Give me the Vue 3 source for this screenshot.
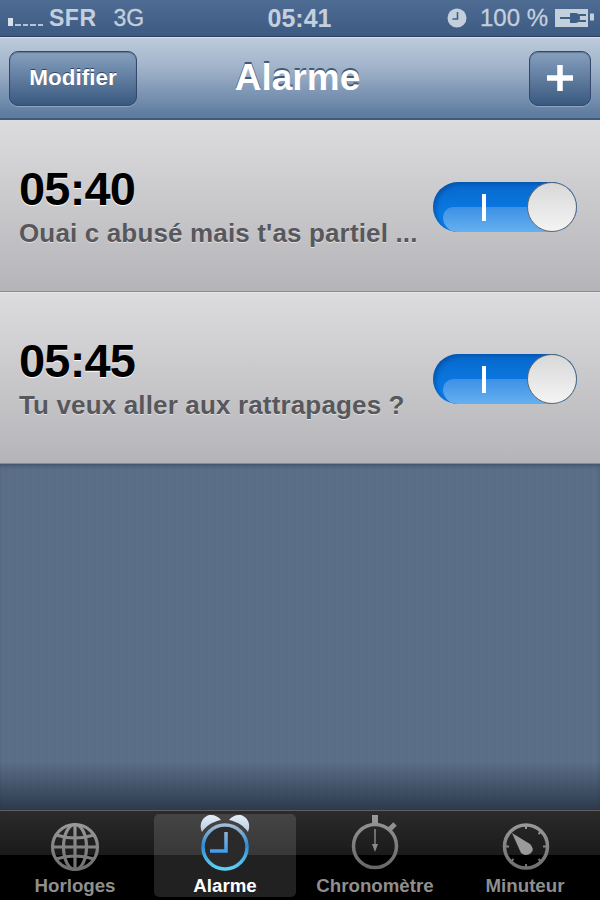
<template>
  <div class="phone">
    <div class="status-bar">
      <div class="status-left">
        <div class="signal">
          <i class="dot on"></i><i class="dot"></i><i class="dot"></i><i class="dot"></i><i class="dot"></i>
        </div>
        <span class="carrier">SFR</span>
        <span class="network">3G</span>
      </div>
      <div class="status-time">05:41</div>
      <div class="status-right">
        <svg class="status-clock" width="20" height="20" viewBox="0 0 20 20">
          <circle cx="10" cy="10" r="9.5" fill="#c4cfdc" />
          <path d="M10.500 4v7H5.500" fill="none" stroke="#3f5f86" stroke-width="1.600" />
        </svg>
        <span class="battery-text">100 %</span>
        <svg class="battery" width="40" height="20" viewBox="0 0 40 20">
          <rect x="0" y="1" width="33" height="18" fill="#c4cfdc" />
          <rect x="35" y="5.500" width="4" height="7" fill="#c4cfdc" />
          <path d="M5 10h10" stroke="#3f5f86" stroke-width="2" />
          <path d="M15 5h5q5 0 5 5t-5 5h-5z" fill="#3f5f86" />
          <path d="M24 7h7M24 13h7" stroke="#3f5f86" stroke-width="2" />
        </svg>
      </div>
    </div>

    <div class="nav-bar">
      <button class="nav-btn edit">Modifier</button>
      <div class="nav-title">Alarme</div>
      <button class="nav-btn add">
        <svg width="26" height="26" viewBox="0 0 26 26">
          <path d="M13 0v26M0 13h26" stroke="#fff" stroke-width="5.500" />
        </svg>
      </button>
    </div>

    <div class="alarm-list">
      <div class="alarm-row" v-for="alarm in alarms" :key="alarm.time">
        <div class="alarm-text">
          <div class="alarm-time">{{ alarm.time }}</div>
          <div class="alarm-label">{{ alarm.label }}</div>
        </div>
        <div class="switch">
          <div class="switch-gloss"></div>
          <div class="switch-bar"></div>
          <div class="switch-knob"></div>
        </div>
      </div>
    </div>

    <div class="backdrop"></div>

    <div class="tab-bar">
      <div class="tab">
        <svg class="tab-icon" width="50" height="50" viewBox="0 0 50 50">
          <defs>
            <linearGradient id="greyIcon" gradientUnits="userSpaceOnUse" x1="0" y1="0" x2="0" y2="58">
              <stop offset="0" stop-color="#9a9a9a" />
              <stop offset="1" stop-color="#636363" />
            </linearGradient>
          </defs>
          <g fill="none" stroke="url(#greyIcon)" stroke-width="3.200">
            <circle cx="25" cy="24" r="22.500" />
            <ellipse cx="25" cy="24" rx="11.500" ry="22.500" />
            <path d="M25 1.500v45M2.500 24h45M6 12q19 6 38 0M6 36q19-6 38 0" />
          </g>
        </svg>
        <span class="tab-label">Horloges</span>
      </div>
      <div class="tab active">
        <svg class="tab-icon" width="50" height="58" viewBox="0 0 50 58">
          <defs>
            <linearGradient id="blueRing" gradientUnits="userSpaceOnUse" x1="0" y1="9" x2="0" y2="56">
              <stop offset="0" stop-color="#a9bdd4" />
              <stop offset="0.45" stop-color="#2f8bd6" />
              <stop offset="1" stop-color="#62d6f8" />
            </linearGradient>
            <linearGradient id="bell" gradientUnits="userSpaceOnUse" x1="0" y1="0" x2="0" y2="17">
              <stop offset="0" stop-color="#e4edf8" />
              <stop offset="1" stop-color="#b9cbe2" />
            </linearGradient>
            <linearGradient id="hands" gradientUnits="userSpaceOnUse" x1="0" y1="17" x2="0" y2="38">
              <stop offset="0" stop-color="#8fb2d6" />
              <stop offset="1" stop-color="#3c9cf0" />
            </linearGradient>
          </defs>
          <path d="M2 17C-2 8 4 0 11 0c4 0 8 2 10 5C12 7 6 11 2 17z" fill="url(#bell)" />
          <path d="M48 17C52 8 46 0 39 0c-4 0-8 2-10 5 9 2 15 6 19 12z" fill="url(#bell)" />
          <circle cx="25" cy="32" r="22" fill="#2a2a2a" stroke="url(#blueRing)" stroke-width="3.500" />
          <path d="M26 17v19H10" fill="none" stroke="url(#hands)" stroke-width="3.500" />
        </svg>
        <span class="tab-label">Alarme</span>
      </div>
      <div class="tab">
        <svg class="tab-icon" width="50" height="58" viewBox="0 0 50 58">
          <g fill="none" stroke="url(#greyIcon)">
            <circle cx="25" cy="31" r="21.500" stroke-width="3.500" />
            <path d="M25 9V0" stroke-width="6" />
            <path d="M39 15l6-6" stroke-width="5" />
            <path d="M25 14v18" stroke-width="1.500" />
          </g>
          <path d="M22 29h6l-3 8z" fill="#8a8a8a" />
        </svg>
        <span class="tab-label">Chronomètre</span>
      </div>
      <div class="tab">
        <svg class="tab-icon" width="50" height="50" viewBox="0 0 50 50">
          <g fill="none" stroke="url(#greyIcon)">
            <circle cx="26" cy="23.500" r="21.500" stroke-width="3.500" />
            <path d="M26 2v4M26 41v4M4 23.500h5M43 23.500h5M41.500 8l-3 3M10.500 39l3-3M41.500 39l-3-3" stroke-width="2" />
          </g>
          <path d="M12 10l18 11q5 5 1 9-5 4-10 0z" fill="#9a9a9a" />
        </svg>
        <span class="tab-label">Minuteur</span>
      </div>
    </div>
  </div>
</template>

<script setup>
const alarms = [
  { time: '05:40', label: "Ouai c abusé mais t'as partiel ..." },
  { time: '05:45', label: 'Tu veux aller aux rattrapages ?' },
]
</script>

<style>
html,
body {
  margin: 0;
  background: #000;
}
</style>

<style scoped>
.phone {
  width: 600px;
  height: 900px;
  display: flex;
  flex-direction: column;
  overflow: hidden;
  font-family: "Liberation Sans", Arial, sans-serif;
  background: #5a6e87;
}

.status-bar {
  height: 37px;
  flex: none;
  display: grid;
  grid-template-columns: 1fr auto 1fr;
  align-items: center;
  padding: 0 5px 0 8px;
  box-sizing: border-box;
  background: linear-gradient(#4f6d93, #3d5b82);
  border-bottom: 1px solid #2c3f5a;
  color: #c4cfdc;
  font-size: 24px;
  font-weight: 400;
}

.status-left {
  display: flex;
  align-items: center;
}

.signal {
  display: flex;
  align-items: flex-end;
  gap: 2px;
  height: 10px;
  margin-top: 6px;
  margin-right: 6px;
}

.dot {
  display: block;
  width: 5.500px;
  height: 2px;
  background: #b6c4d4;
}

.dot.on {
  width: 5px;
  height: 8px;
  background: #d8e0ea;
}

.carrier {
  font-weight: 700;
  font-size: 23px;
  letter-spacing: 0.5px;
}

.network {
  margin-left: 17px;
  font-size: 23px;
  -webkit-text-stroke: 0.3px #c4cfdc;
}

.status-time {
  font-size: 25px;
  font-weight: 700;
  margin-right: 4px;
}

.status-right {
  display: flex;
  align-items: center;
  justify-content: flex-end;
}

.status-clock {
  margin-right: 13px;
}

.battery-text {
  font-size: 24px;
  margin-right: 7px;
  -webkit-text-stroke: 0.3px #c4cfdc;
}

.nav-bar {
  height: 83px;
  flex: none;
  display: grid;
  grid-template-columns: 1fr auto 1fr;
  align-items: center;
  padding: 0 9px;
  box-sizing: border-box;
  background: linear-gradient(#bccadb, #a3b5cb 35%, #5f7da1 95%);
  border-top: 1px solid #d7e1ed;
  border-bottom: 2px solid #425a7a;
}

.nav-btn {
  height: 55px;
  border-radius: 9px;
  border: 1px solid #34496a;
  background: linear-gradient(#87a0bf, #39597f);
  color: #fff;
  font-family: inherit;
  font-weight: 700;
  font-size: 22.500px;
  text-shadow: 0 -1px 0 #2f4462;
  box-shadow: 0 1px 0 rgba(220, 230, 245, 0.35), inset 0 1px 1px rgba(30, 45, 70, 0.35);
  display: flex;
  align-items: center;
  justify-content: center;
  padding: 0;
}

.nav-btn.edit {
  width: 128px;
}

.nav-btn.add {
  width: 62px;
  justify-self: end;
}

.nav-title {
  color: #fff;
  font-size: 37px;
  font-weight: 700;
  text-shadow: 0 -2px 0 #42597a;
  margin-right: 5px;
}

.alarm-list {
  flex: none;
}

.alarm-row {
  height: 172px;
  box-sizing: border-box;
  display: flex;
  align-items: center;
  justify-content: space-between;
  padding: 2px 23px 0 19px;
  background: linear-gradient(#dcdcde, #b5b5b9);
  border-bottom: 1px solid #8a8a8c;
}

.alarm-row + .alarm-row {
  border-top: 1px solid #e6e6e8;
}

.alarm-time {
  font-size: 47px;
  line-height: 49px;
  font-weight: 700;
  color: #000;
  letter-spacing: -0.800px;
  text-shadow: 0 1px 1px #fff;
}

.alarm-label {
  font-size: 26px;
  line-height: 34px;
  margin-top: 3px;
  font-weight: 700;
  color: #57575c;
  letter-spacing: 0.150px;
  text-shadow: 0 1px 0 rgba(255, 255, 255, 0.5);
  white-space: nowrap;
}

.switch {
  position: relative;
  width: 144px;
  height: 50px;
  border-radius: 25px;
  overflow: hidden;
  background: linear-gradient(#0868cc, #0a84f0);
  box-shadow: inset 3px 2px 4px rgba(0, 50, 120, 0.4);
}

.switch-gloss {
  position: absolute;
  left: 10px;
  right: 0;
  top: 25px;
  bottom: 0;
  border-radius: 14px 0 0 20px;
  background: linear-gradient(#3c90e6, #66b0f0);
}

.switch-bar {
  position: absolute;
  left: 49px;
  top: 12px;
  width: 4px;
  height: 27px;
  background: #fff;
}

.switch-knob {
  position: absolute;
  right: 0;
  top: 0;
  width: 50px;
  height: 50px;
  box-sizing: border-box;
  border-radius: 50%;
  border: 1px solid #666;
  background: linear-gradient(#d8d8d8, #f4f4f4);
}

.backdrop {
  flex: 1;
  background:
    linear-gradient(rgba(40, 52, 70, 0) 86%, rgba(40, 52, 70, 0.9) 100%),
    repeating-linear-gradient(90deg, #5b6f88 0 4px, #596d86 4px 8px);
  box-shadow: inset 0 3px 4px -2px rgba(30, 40, 60, 0.5);
}

.tab-bar {
  height: 90px;
  flex: none;
  display: grid;
  grid-template-columns: repeat(4, 150px);
  box-sizing: border-box;
  padding: 3px 0 3px;
  background: linear-gradient(#2b2b2b 0, #1a1a1a 50%, #000 50%);
  border-top: 1px solid #5f5f5f;
}

.tab {
  position: relative;
  display: flex;
  flex-direction: column;
  align-items: center;
  justify-content: flex-end;
}

.tab.active {
  background: rgba(255, 255, 255, 0.13);
  border-radius: 5px;
  margin: 0 4px;
}

.tab-icon {
  display: block;
  overflow: visible;
}

.tab-label {
  font-size: 18.700px;
  line-height: 22px;
  font-weight: 700;
  color: #8f8f8f;
  margin-top: 2px;
}

.tab.active .tab-label {
  color: #fff;
}

.tab.active .tab-icon {
  margin-top: -10px;
}
</style>
